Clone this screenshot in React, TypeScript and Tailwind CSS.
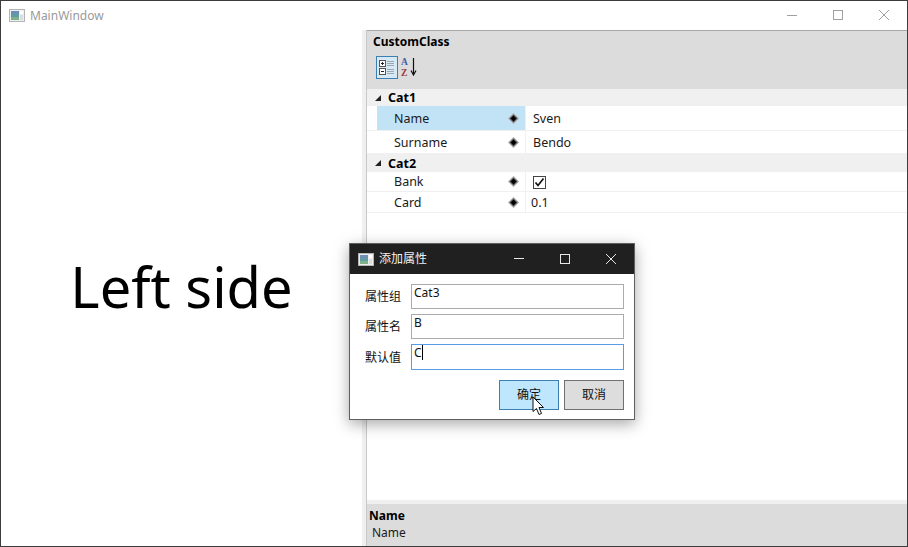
import React from "react";

const ui = { fontFamily: '"Noto Sans", "Noto Sans CJK SC", sans-serif' };

function Diamond() {
  return (
    <svg width="11" height="11" viewBox="0 0 11 11" className="shrink-0">
      <path d="M5.5 0 L11 5.5 L5.5 11 L0 5.5 Z" fill="#a8a8a8" />
      <path d="M5.5 1.5 L9.5 5.5 L5.5 9.5 L1.5 5.5 Z" fill="#4a4a4a" />
      <path d="M5.5 2.8 L8.2 5.5 L5.5 8.2 L2.8 5.5 Z" fill="#000" />
    </svg>
  );
}

function AppIcon() {
  return (
    <svg width="16" height="13" viewBox="0 0 16 13" className="shrink-0">
      <rect x="0.5" y="0.5" width="15" height="12" fill="#eeeeee" stroke="#b4b4b4" />
      <rect x="2" y="2" width="8" height="9" fill="#5f9ba3" />
      <rect x="2" y="2" width="8" height="3" fill="#6d8fb5" />
      <rect x="2" y="8" width="8" height="3" fill="#7fb08a" />
      <rect x="11" y="2" width="3" height="3" fill="#fff" />
      <rect x="11" y="6" width="3" height="5" fill="#d6dfdf" />
    </svg>
  );
}

function Arrow() {
  return (
    <svg width="6" height="6" viewBox="0 0 6 6" className="shrink-0">
      <path d="M6 0 L6 6 L0 6 Z" fill="#222" />
    </svg>
  );
}

function CatRow({ label, h }: { label: string; h: string }) {
  return (
    <div className={`flex items-center bg-[#f0f0f0] ${h}`}>
      <div className="w-[21px] flex justify-center">
        <Arrow />
      </div>
      <span className="text-[12.5px] font-bold text-black pt-[2px]">{label}</span>
    </div>
  );
}

function PropRow({
  label,
  h,
  selected,
  valuePad = "pl-[7px]",
  pt = "pt-[2px]",
  children,
}: {
  label: string;
  h: string;
  selected?: boolean;
  valuePad?: string;
  pt?: string;
  children: React.ReactNode;
}) {
  return (
    <div className={`flex ${h} pl-[10px] border-b border-[#f0f0f0]`}>
      <div className={`w-[148px] flex items-center justify-between pl-[17px] pr-[6px] ${selected ? "bg-[#c2e3f6]" : ""}`}>
        <span className={`text-[12.5px] text-[#1a1a1a] ${pt}`}>{label}</span>
        <Diamond />
      </div>
      <div className={`flex-1 flex items-center border-l border-[#f0f0f0] ${valuePad} ${pt} text-[12.5px] text-[#1a1a1a]`}>
        {children}
      </div>
    </div>
  );
}

function Field({
  label,
  value,
  active,
  h,
  pt,
}: {
  label: string;
  value: string;
  active?: boolean;
  h: string;
  pt: string;
}) {
  return (
    <div className={`flex items-center ${h}`}>
      <span className={`w-[61px] text-[12px] text-[#111] pl-[15px] leading-none whitespace-nowrap ${pt}`}>{label}</span>
      <div
        className={`w-[213px] h-full border bg-white pl-[2px] text-[12px] leading-[15px] text-[#111] flex items-start ${
          active ? "border-[#569de5]" : "border-[#ababab]"
        }`}
      >
        <span>{value}</span>
        {active && <span className="w-px h-[15px] bg-black" />}
      </div>
    </div>
  );
}

export default function App() {
  return (
    <div className="relative w-[908px] h-[547px] overflow-hidden bg-white border border-[#3c3c3c] flex flex-col" style={ui}>
      {/* Title bar */}
      <div className="h-[29px] flex items-center shrink-0 pl-[8px]">
        <AppIcon />
        <span className="ml-[5px] text-[12px] text-[#9a9a9a]">MainWindow</span>
        <div className="ml-auto flex items-center">
          <svg width="46" height="29" viewBox="0 0 46 29">
            <path d="M18 14.5 H28" stroke="#a0a0a0" />
          </svg>
          <svg width="46" height="29" viewBox="0 0 46 29">
            <rect x="18.5" y="9.5" width="9" height="9" fill="none" stroke="#a0a0a0" />
          </svg>
          <svg width="46" height="29" viewBox="0 0 46 29">
            <path d="M18 9 L28 19 M28 9 L18 19" stroke="#a0a0a0" />
          </svg>
        </div>
      </div>

      <div className="flex-1 flex min-h-0">
        {/* Left */}
        <div className="w-[361px] flex items-center justify-center pb-[4px]">
          <span className="text-[56px] leading-none text-black">Left side</span>
        </div>
        {/* Splitter */}
        <div className="w-[5px] bg-[#f0f0f0] border-r border-[#c8c8c8]" />
        {/* Property grid */}
        <div className="flex-1 flex flex-col min-w-0">
          <div className="h-[59px] bg-[#dcdcdc] border-t border-[#a8a8a8] pl-[6px] shrink-0">
            <div className="text-[12px] font-bold text-black leading-[20px] pt-[1px]">CustomClass</div>
            <div className="flex items-center mt-[4px] ml-[3px] gap-[3px]">
              <div className="w-[22px] h-[23px] border border-[#3c7fb1] bg-[#d5e8f4] flex items-center justify-center">
                <svg width="16" height="17" viewBox="0 0 16 17">
                  <rect x="0.5" y="1.5" width="6" height="6" fill="#fff" stroke="#555" />
                  <path d="M2 4.5 H5 M3.5 3 V6" stroke="#222" />
                  <rect x="0.5" y="9.5" width="6" height="6" fill="#fff" stroke="#555" />
                  <path d="M2 12.5 H5" stroke="#222" />
                  <path d="M8 2.5 H15 M8 4.5 H15 M8 6.5 H15 M8 10.5 H15 M8 12.5 H15 M8 14.5 H15" stroke="#9aa8b4" />
                </svg>
              </div>
              <svg width="18" height="21" viewBox="0 0 18 21">
                <text x="0" y="8" fontSize="9.5" fontWeight="700" fill="#3b5ea6" fontFamily="Liberation Serif">A</text>
                <text x="0" y="18.5" fontSize="9.5" fontWeight="700" fill="#9a3a3a" fontFamily="Liberation Serif">Z</text>
                <path d="M12.5 1 V17 M10 13.5 L12.5 18 L15 13.5" stroke="#111" fill="none" strokeWidth="1.2" />
              </svg>
            </div>
          </div>
          <CatRow label="Cat1" h="h-[17px]" />
          <PropRow label="Name" h="h-[25px]" selected>Sven</PropRow>
          <PropRow label="Surname" h="h-[23px]">Bendo</PropRow>
          <CatRow label="Cat2" h="h-[18px]" />
          <PropRow label="Bank" h="h-[20px]" pt="pt-[1px]">
            <span className="w-[13px] h-[13px] border border-[#444] bg-white flex items-center justify-center">
              <svg width="11" height="11" viewBox="0 0 11 11">
                <path d="M1.5 5.5 L4 8.5 L9.5 1.5" stroke="#111" strokeWidth="1.7" fill="none" />
              </svg>
            </span>
          </PropRow>
          <PropRow label="Card" h="h-[21px]" valuePad="pl-[5px]">0.1</PropRow>
          <div className="flex-1" />
          <div className="h-[4px] bg-[#f0f0f0] shrink-0" />
          <div className="h-[42px] bg-[#dcdcdc] shrink-0 pl-[2px] pt-[3px]">
            <div className="text-[12px] font-bold text-black leading-[17px]">Name</div>
            <div className="text-[12px] text-[#1a1a1a] leading-[17px] pl-[3px]">Name</div>
          </div>
        </div>
      </div>

      {/* Dialog */}
      <div className="absolute left-[348px] top-[242px] w-[286px] h-[177px] bg-white border border-[#5e5e5e] shadow-[0_4px_14px_rgba(0,0,0,0.35)] flex flex-col">
        <div className="h-[30px] bg-[#202020] flex items-center pl-[8px] shrink-0">
          <AppIcon />
          <span className="ml-[5px] text-[12px] text-[#f0f0f0]">添加属性</span>
          <div className="ml-auto flex items-center">
            <svg width="46" height="30" viewBox="0 0 46 30">
              <path d="M18 14.5 H28" stroke="#e8e8e8" />
            </svg>
            <svg width="46" height="30" viewBox="0 0 46 30">
              <rect x="18.5" y="10.5" width="9" height="9" fill="none" stroke="#e8e8e8" />
            </svg>
            <svg width="46" height="30" viewBox="0 0 46 30">
              <path d="M18 10 L28 20 M28 10 L18 20" stroke="#e8e8e8" />
            </svg>
          </div>
        </div>
        <div className="flex flex-col gap-[5px] pt-[10px]">
          <Field label="属性组" value="Cat3" h="h-[25px]" pt="" />
          <Field label="属性名" value="B" h="h-[25px]" pt="" />
          <Field label="默认值" value="C" h="h-[26px]" pt="pt-[2px]" active />
        </div>
        <div className="flex justify-end gap-[5px] pr-[10px] mt-[10px]">
          <div className="w-[60px] h-[30px] bg-[#bee6fd] border border-[#3c7fb1] flex items-center justify-center text-[12px] text-[#111]">确定</div>
          <div className="w-[60px] h-[30px] bg-[#dddddd] border border-[#707070] flex items-center justify-center text-[12px] text-[#111]">取消</div>
        </div>
      </div>

      {/* Cursor */}
      <svg className="absolute left-[531px] top-[395px]" width="14" height="20" viewBox="0 0 14 20">
        <path d="M1 1 V15.5 L4.5 12.5 L7 18.5 L9.5 17.5 L7 11.5 H11.5 Z" fill="#fff" stroke="#111" strokeWidth="1" />
      </svg>
    </div>
  );
}
